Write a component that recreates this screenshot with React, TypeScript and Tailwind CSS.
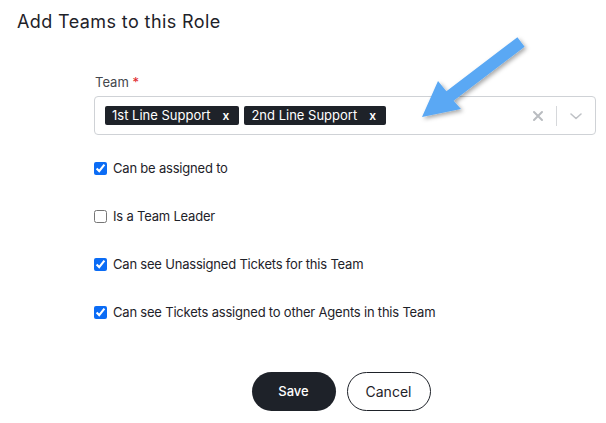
import React from 'react'

const font = { fontFamily: 'Inter, "Noto Sans", sans-serif' }

function Chip({ label }: { label: string }) {
  return (
    <span className="flex items-center h-[19px] rounded-[2px] bg-[#1e2229] pl-[7px] pr-[10px] text-[13px] text-white">
      <span>{label}</span>
      <span className="ml-[12px] text-[12px] font-semibold">x</span>
    </span>
  )
}

function Check({ label, checked }: { label: string; checked: boolean }) {
  return (
    <label className="flex items-center gap-[6px] text-[13px] tracking-[-0.2px] text-[#1e2229]">
      <input
        type="checkbox"
        defaultChecked={checked}
        className="m-0 w-[13px] h-[13px] accent-[#0b6cf5]"
      />
      <span>{label}</span>
    </label>
  )
}

export default function App() {
  return (
    <div className="relative w-[606px] h-[423px] bg-white overflow-hidden" style={font}>
      <h1 className="pl-[17px] pt-[10px] text-[18px] tracking-[0.4px] text-[#1e2229] leading-[24px]">Add Teams to this Role</h1>

      <div className="ml-[94px] mr-[10px] mt-[38px]">
        <div className="text-[13px] text-[#44474d] leading-[20px] pl-px">
          Team <span className="text-[#e0242a]">*</span>
        </div>
        <div className="mt-[4px] h-[39px] rounded-[4px] border border-[#cfd2d6] flex items-center pl-[10px]">
          <div className="flex-1 flex items-center gap-[5px]">
            <Chip label="1st Line Support" />
            <Chip label="2nd Line Support" />
          </div>
          <div className="flex items-center h-full">
            <svg width="12" height="12" viewBox="0 0 12 12" className="mr-[12px]">
              <path d="M2 2l8 8M10 2l-8 8" stroke="#b9bcc0" strokeWidth="2" strokeLinecap="round" />
            </svg>
            <div className="w-px h-[20px] bg-[#d6d8db]" />
            <svg width="14" height="10" viewBox="0 0 14 10" className="mx-[12px]">
              <path d="M2 3l5 4.5L12 3" stroke="#bfc2c6" strokeWidth="1.6" fill="none" strokeLinecap="round" strokeLinejoin="round" />
            </svg>
          </div>
        </div>

        <div className="mt-[25px] flex flex-col gap-[31px] leading-[17px]">
          <Check label="Can be assigned to" checked />
          <Check label="Is a Team Leader" checked={false} />
          <Check label="Can see Unassigned Tickets for this Team" checked />
          <Check label="Can see Tickets assigned to other Agents in this Team" checked />
        </div>
      </div>

      <div className="mt-[51px] flex justify-center gap-[11px] pl-[76px]">
        <button className="w-[84px] h-[39px] rounded-full bg-[#1e2229] text-white text-[13px] font-medium">Save</button>
        <button className="w-[84px] h-[39px] rounded-full border border-[#1e2229] bg-white text-[#1e2229] text-[14px]">Cancel</button>
      </div>

      <svg className="absolute left-0 top-0 pointer-events-none" width="606" height="423">
        <defs>
          <filter id="sh" x="-20%" y="-20%" width="140%" height="140%">
            <feDropShadow dx="2" dy="2" stdDeviation="2" floodColor="#000" floodOpacity="0.35" />
          </filter>
        </defs>
        <polygon
          points="517.4,37.2 524.6,46.8 453.6,100.8 461,109 422,117 438,81 446.4,91.2"
          fill="#5aa8f4"
          filter="url(#sh)"
        />
      </svg>
    </div>
  )
}
